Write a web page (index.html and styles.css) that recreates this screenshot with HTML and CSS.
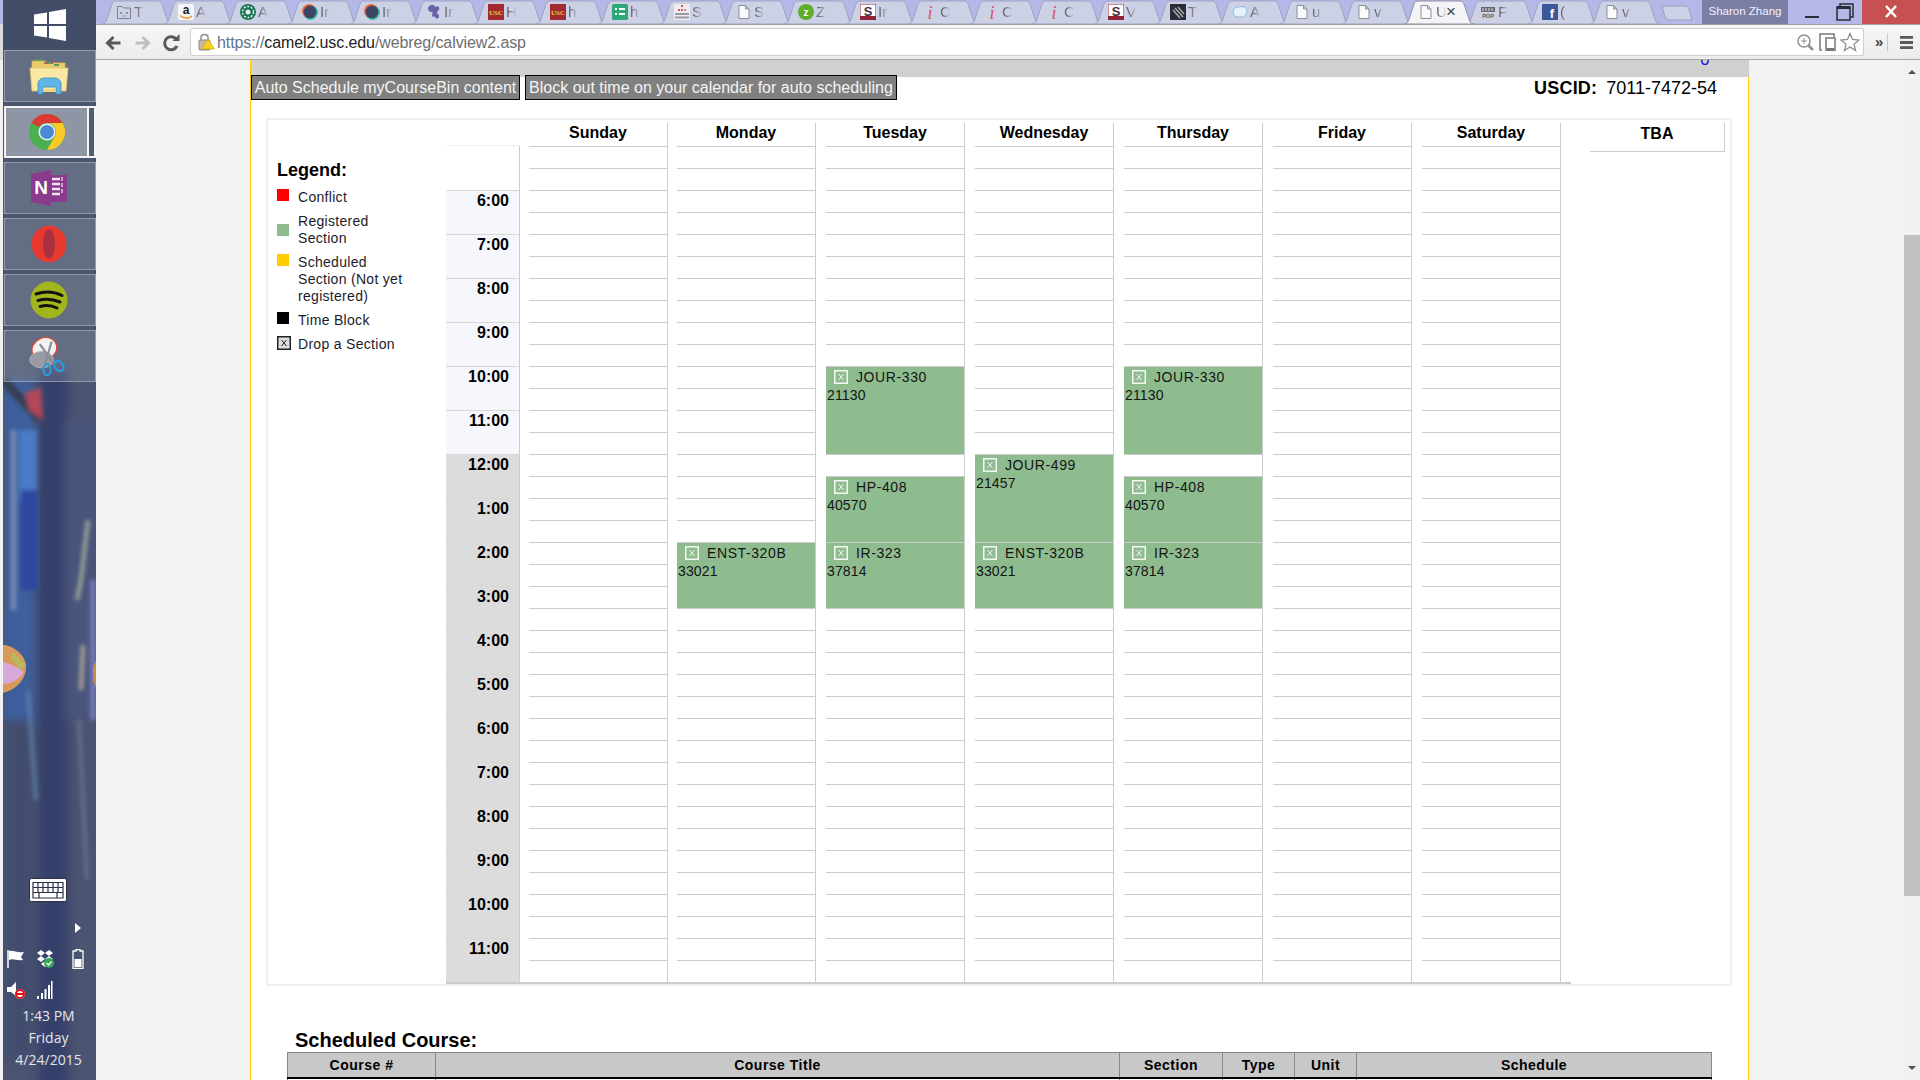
FILE: index.html
```html
<!DOCTYPE html>
<html lang="en">
<head>
<meta charset="utf-8">
<title>calview2</title>
<link rel="stylesheet" href="styles.css">
</head>
<body>
<svg class="defs" width="0" height="0" aria-hidden="true">
  <defs>
    <symbol id="tab-shape" viewBox="0 0 70 24" preserveAspectRatio="none">
      <path d="M0 24 C3 24 4 22 5 19 L10 4 C11 1.500 12 1 15 1 L55 1 C58 1 59 1.500 60 4 L65 19 C66 22 67 24 70 24 Z"/>
    </symbol>
    <symbol id="fav-doc" viewBox="0 0 16 16"><path d="M3 1.500H9.500L13 5V14.500H3Z M9.500 1.500V5H13" fill="#fafafa" stroke="#8a8f98"/></symbol>
    <symbol id="fav-orbit" viewBox="0 0 16 16"><circle cx="8.500" cy="8.500" r="7.500" fill="#38c4b4"/><circle cx="7" cy="7" r="7" fill="#ef6a3c"/><circle cx="8" cy="8" r="6.500" fill="#3c4664"/></symbol>
    <symbol id="fav-usc" viewBox="0 0 16 16"><rect width="16" height="16" fill="#a32a30"/><text x="8" y="11" font-size="7" font-weight="700" text-anchor="middle" fill="#f2c83c" font-family="Liberation Serif">USC</text></symbol>
    <symbol id="fav-i" viewBox="0 0 16 16"><text x="8" y="15" font-size="18" font-style="italic" text-anchor="middle" fill="#d8506e" font-family="Liberation Serif">i</text></symbol>
    <symbol id="fav-s" viewBox="0 0 16 16"><rect width="16" height="16" fill="#fff" stroke="#8f2236"/><rect y="12" width="16" height="4" fill="#8f2236"/><text x="8" y="12" font-size="13" font-weight="700" text-anchor="middle" fill="#4a2a3a" font-family="Liberation Sans">S</text></symbol>
    <symbol id="drop-box" viewBox="0 0 14 14"><rect x=".75" y=".75" width="12.500" height="12.500" fill="none" stroke="currentColor" stroke-width="1.500"/><path d="M4.500 4 L9.500 10 M9.500 4 L4.500 10" stroke="currentColor" stroke-width="1" fill="none"/></symbol>
  </defs>
</svg>

<div class="edge"></div>

<aside class="sidebar">
  <svg class="wallpaper" viewBox="0 0 93 1080" preserveAspectRatio="none" aria-hidden="true">
    <defs>
      <filter id="soft"><feGaussianBlur stdDeviation="2"/></filter>
      <filter id="softer"><feGaussianBlur stdDeviation="5"/></filter>
    </defs>
    <rect width="93" height="1080" fill="#4b5470"/>
    <rect width="93" height="380" fill="#4a5670"/>
    <g filter="url(#softer)">
      <rect x="0" y="380" width="32" height="350" fill="#3c5f9c"/>
      <rect x="35" y="370" width="30" height="720" fill="#36406a"/>
      <rect x="62" y="420" width="30" height="300" fill="#48557c"/>
      <rect x="0" y="720" width="30" height="340" fill="#434e6e"/>
    </g>
    <g filter="url(#soft)">
      <rect x="16" y="430" width="18" height="70" fill="#4a7cc4"/>
      <rect x="8" y="430" width="5" height="180" fill="#7a8eb4"/>
      <rect x="18" y="490" width="16" height="100" fill="#2e47a0"/>
      <path d="M0 380 L38 420" stroke="#343c52" stroke-width="9"/>
      <path d="M22 392 L38 388 L40 420 L26 410Z" fill="#b44658"/>
      <path d="M85 520 L78 580 L74 600" stroke="#a0a898" stroke-width="4" fill="none"/>
      <path d="M90 580 L90 720" stroke="#7a80c0" stroke-width="5"/>
      <path d="M80 645 L78 690" stroke="#b4a898" stroke-width="4"/>
      <path d="M76 720 L84 880" stroke="#6d7590" stroke-width="3"/>
      <path d="M25 690 L33 800" stroke="#5f84b0" stroke-width="3"/>
    </g>
    <path d="M0 645 C10 645 22 655 23 665 C24 680 12 690 0 693Z" fill="#d89a58"/>
    <path d="M0 662 C8 664 16 668 21 672 C16 680 8 684 0 684Z" fill="#d8a8d8"/>
    <path d="M10 652 L22 664 L19 670 L8 660Z" fill="#b8b85c"/>
    <path d="M93 660 L90 668 L90 680 L93 688Z" fill="#c88a50"/>
  </svg>

  <div class="start">
    <svg class="start-logo" viewBox="0 0 32 32" aria-hidden="true"><path d="M0 5.500 L13 3.500 V15 H0Z M15 3 L32 0 V15 H15Z M0 17 H13 V28.500 L0 26.500Z M15 17 H32 V32 L15 29Z" fill="#fff"/></svg>
  </div>

  <div class="tile">
    <svg class="tile-icon" viewBox="0 0 40 40" aria-hidden="true">
      <path d="M3 5 H16 L18 7 H36 V34 H3Z" fill="#eccb6c" stroke="#d8b850" stroke-width=".8"/>
      <path d="M6 4 H13 M15 7 H22 M25 9 H30" stroke="#5f9a5a" stroke-width="2"/>
      <path d="M17 7 H19 M22 7 H24" stroke="#d8503c" stroke-width="2"/>
      <path d="M1 12 H39 L37 35 H3Z" fill="#fbe8a4" stroke="#e0c468" stroke-width=".8"/>
      <path d="M9 38 V28 C9 24 12 22 16 22 H25 C29 22 32 24 32 28 V38 H27 V31 H14 V38Z" fill="#62b6e6" stroke="#3a88c0" stroke-width=".8"/>
      <rect x="14" y="33" width="13" height="3" fill="#f2d67a"/>
    </svg>
  </div>
  <div class="tile tile-active">
    <svg class="tile-icon" viewBox="0 0 40 40" aria-hidden="true">
      <circle cx="20" cy="20" r="18" fill="#4caf50"/>
      <path d="M4.400 11 A18 18 0 0 1 35.600 11 L20 11 A9 9 0 0 0 12 15Z" fill="#db3a32"/>
      <path d="M35.600 11 A18 18 0 0 1 20 38 L27.800 24.500 A9 9 0 0 0 20 11Z" fill="#fbc925"/>
      <circle cx="20" cy="20" r="8.500" fill="#eef2f6"/>
      <circle cx="20" cy="20" r="7" fill="#4a8ad4"/>
    </svg>
  </div>
  <div class="tile">
    <svg class="tile-icon" viewBox="0 0 40 40" aria-hidden="true">
      <path d="M2 6 L22 2 V38 L2 34Z" fill="#8a3a8c"/>
      <rect x="22" y="7" width="16" height="27" fill="#8a3a8c"/>
      <path d="M23 11 H31 M23 16 H31 M23 21 H31 M23 26 H31" stroke="#f0e4f0" stroke-width="2.500"/>
      <path d="M33 9 V13 M33 15 V19 M33 21 V25" stroke="#c8a4c8" stroke-width="2"/>
      <text x="12" y="26" font-size="19" font-weight="700" text-anchor="middle" fill="#fff" font-family="Liberation Sans">N</text>
    </svg>
  </div>
  <div class="tile">
    <svg class="tile-icon" viewBox="0 0 40 40" aria-hidden="true">
      <ellipse cx="20" cy="20" rx="17.500" ry="18.500" fill="#e8392f"/>
      <ellipse cx="20" cy="20" rx="6" ry="15" fill="#a83040"/>
    </svg>
  </div>
  <div class="tile">
    <svg class="tile-icon" viewBox="0 0 40 40" aria-hidden="true">
      <circle cx="20" cy="20" r="18.500" fill="#a2b51c"/>
      <path d="M7 14 C16 11 25 11.500 33 15.500 M9 20.500 C16 18.500 24 19 31 22 M11 26.500 C17 25 23 25.500 28 28" fill="none" stroke="#12140c" stroke-width="3" stroke-linecap="round"/>
    </svg>
  </div>
  <div class="tile tile-snip">
    <svg class="tile-icon" viewBox="0 0 40 44" aria-hidden="true">
      <ellipse cx="16" cy="14" rx="14" ry="12" transform="rotate(-25 16 14)" fill="#f2f2f2" stroke="#d84a3a" stroke-width="1.500"/>
      <ellipse cx="13" cy="26" rx="13" ry="9" fill="#9a9aa4" stroke="#b0b0b8"/>
      <path d="M11 9 L26 30 M24 6 L17 30" stroke="#8a8f98" stroke-width="2.500"/>
      <ellipse cx="19" cy="37" rx="4" ry="6" fill="none" stroke="#2a9ae0" stroke-width="2.500"/>
      <ellipse cx="32" cy="33" rx="4.500" ry="6" transform="rotate(-40 32 33)" fill="none" stroke="#2a9ae0" stroke-width="2.500"/>
    </svg>
  </div>

  <svg class="keyboard" viewBox="0 0 38 24" aria-hidden="true">
    <rect x=".5" y=".5" width="37" height="23" rx="2" fill="#fff" stroke="#2c3044"/>
    <path d="M4 4.500 H34 V20 H4Z M4 9.500 H34 M4 14.500 H34 M9 4.500 V14.500 M14 4.500 V14.500 M19 4.500 V14.500 M24 4.500 V14.500 M29 4.500 V14.500 M10 14.500 V20 M28 14.500 V20" fill="none" stroke="#2c3044" stroke-width="1.200"/>
  </svg>
  <div class="tray-more"></div>
  <div class="tray-row">
    <svg class="tray-icon" viewBox="0 0 20 20" aria-hidden="true"><path d="M2 1 V19" stroke="#fff" stroke-width="1.500"/><path d="M3 2 C8 1 10 4 18 3 L15 8 L17 11 C10 12 8 9 3 11Z" fill="#fff"/></svg>
    <svg class="tray-icon" viewBox="0 0 20 20" aria-hidden="true"><path d="M2 4 L6 1 L10 4 L14 1 L18 4 L14 7 L18 10 L14 13 L10 10 L6 13 L2 10 L6 7 L10 10 L14 7 L10 4 L6 7Z" fill="#fff"/><path d="M6 15 L10 18 L14 15 L10 12Z" fill="#fff"/><circle cx="14" cy="14" r="5" fill="#34a853"/><path d="M11.500 14 L13.500 16 L16.500 12.500" stroke="#fff" stroke-width="1.300" fill="none"/></svg>
    <svg class="tray-icon tray-battery" viewBox="0 0 20 20" aria-hidden="true"><path d="M8 .5 H12 V2 H15 V19.500 H5 V2 H8Z" fill="none" stroke="#fff" stroke-width="1.300"/><rect x="6.500" y="10" width="7" height="8" fill="#fff"/></svg>
  </div>
  <div class="tray-row tray-row-short">
    <svg class="tray-icon" viewBox="0 0 20 20" aria-hidden="true"><path d="M1 7 H5 L10 2 V16 L5 12 H1Z" fill="#fff"/><circle cx="14" cy="14" r="5" fill="#fff"/><circle cx="14" cy="14" r="4" fill="none" stroke="#e01010" stroke-width="2"/><path d="M11 14 H17" stroke="#e01010" stroke-width="2"/></svg>
    <svg class="tray-icon" viewBox="0 0 20 20" aria-hidden="true"><path d="M3 16 H5 V19 H3Z M7 13 H9 V19 H7Z M10.500 9 H12.500 V19 H10.500Z M14 5 H16 V19 H14Z M17 1 H18.500 V19 H17Z" fill="#fff"/></svg>
  </div>
  <div class="clock">
    <div>1:43 PM</div>
    <div>Friday</div>
    <div>4/24/2015</div>
  </div>
</aside>

<div class="browser">
  <header class="tabstrip">
    <div class="tab">
      <svg class="tab-shape"><use href="#tab-shape"/></svg>
      <svg class="fav" viewBox="0 0 16 16"><path d="M1.500 14.500 V2.500 H6 L7.500 4 H14.500 V14.500Z" fill="none" stroke="#7d8088"/><path d="M4 8 L6 10 M6 8 L4 10 M10 8 L12 10 M12 8 L10 10 M6 12 H10" stroke="#7d8088" stroke-width=".8"/></svg>
      <span class="tab-title">T</span>
    </div>
    <div class="tab">
      <svg class="tab-shape"><use href="#tab-shape"/></svg>
      <svg class="fav" viewBox="0 0 16 16"><rect width="16" height="16" rx="2" fill="#f4f4f8"/><text x="8" y="10" font-size="12" font-weight="700" text-anchor="middle" fill="#222" font-family="Liberation Sans">a</text><path d="M2 11.500 C6 15 11 15 14 12" stroke="#f0941e" stroke-width="1.500" fill="none"/></svg>
      <span class="tab-title">A</span>
    </div>
    <div class="tab">
      <svg class="tab-shape"><use href="#tab-shape"/></svg>
      <svg class="fav" viewBox="0 0 16 16"><circle cx="8" cy="8" r="8" fill="#1a7454"/><circle cx="8" cy="8" r="5.500" fill="none" stroke="#e4efe8" stroke-dasharray="2 1.500" stroke-width="1.500"/><circle cx="8" cy="8" r="2.500" fill="#e4efe8"/></svg>
      <span class="tab-title">A</span>
    </div>
    <div class="tab">
      <svg class="tab-shape"><use href="#tab-shape"/></svg>
      <svg class="fav"><use href="#fav-orbit"/></svg>
      <span class="tab-title">In</span>
    </div>
    <div class="tab">
      <svg class="tab-shape"><use href="#tab-shape"/></svg>
      <svg class="fav"><use href="#fav-orbit"/></svg>
      <span class="tab-title">In</span>
    </div>
    <div class="tab">
      <svg class="tab-shape"><use href="#tab-shape"/></svg>
      <svg class="fav" viewBox="0 0 16 16"><path d="M2 4 C4 0 8 0 9 3 C12 1 15 4 12 7 C10 8 11 10 13 11 C14 15 9 16 9 12 C7 15 5 11 7 8 C5 8 2 8 2 4Z" fill="#6a62a8"/></svg>
      <span class="tab-title">In</span>
    </div>
    <div class="tab">
      <svg class="tab-shape"><use href="#tab-shape"/></svg>
      <svg class="fav"><use href="#fav-usc"/></svg>
      <span class="tab-title">H</span>
    </div>
    <div class="tab">
      <svg class="tab-shape"><use href="#tab-shape"/></svg>
      <svg class="fav"><use href="#fav-usc"/></svg>
      <span class="tab-title">h</span>
    </div>
    <div class="tab">
      <svg class="tab-shape"><use href="#tab-shape"/></svg>
      <svg class="fav" viewBox="0 0 16 16"><rect width="16" height="16" rx="1.500" fill="#2ea878"/><path d="M3 5 H5 M7 5 H13 M3 10 H5 M7 10 H13" stroke="#fff" stroke-width="1.800"/></svg>
      <span class="tab-title">h</span>
    </div>
    <div class="tab">
      <svg class="tab-shape"><use href="#tab-shape"/></svg>
      <svg class="fav" viewBox="0 0 16 16"><rect width="16" height="16" fill="#eeeef2"/><path d="M7 1 H9 V3 H7Z M4 5 H6 V7 H4Z M7 5 H9 V7 H7Z" fill="#e0524e"/><path d="M10 5 H12 V7 H10Z M1 9 H15 V11 H1Z M1 12.500 H15 V14.500 H1Z" fill="#9a9aa4"/></svg>
      <span class="tab-title">S</span>
    </div>
    <div class="tab">
      <svg class="tab-shape"><use href="#tab-shape"/></svg>
      <svg class="fav"><use href="#fav-doc"/></svg>
      <span class="tab-title">S</span>
    </div>
    <div class="tab">
      <svg class="tab-shape"><use href="#tab-shape"/></svg>
      <svg class="fav" viewBox="0 0 16 16"><circle cx="8" cy="8" r="8" fill="#62ac2c"/><text x="8" y="11.500" font-size="10" font-weight="700" text-anchor="middle" fill="#fff" font-family="Liberation Sans">z</text></svg>
      <span class="tab-title">Z</span>
    </div>
    <div class="tab">
      <svg class="tab-shape"><use href="#tab-shape"/></svg>
      <svg class="fav"><use href="#fav-s"/></svg>
      <span class="tab-title">In</span>
    </div>
    <div class="tab">
      <svg class="tab-shape"><use href="#tab-shape"/></svg>
      <svg class="fav"><use href="#fav-i"/></svg>
      <span class="tab-title">C</span>
    </div>
    <div class="tab">
      <svg class="tab-shape"><use href="#tab-shape"/></svg>
      <svg class="fav"><use href="#fav-i"/></svg>
      <span class="tab-title">C</span>
    </div>
    <div class="tab">
      <svg class="tab-shape"><use href="#tab-shape"/></svg>
      <svg class="fav"><use href="#fav-i"/></svg>
      <span class="tab-title">C</span>
    </div>
    <div class="tab">
      <svg class="tab-shape"><use href="#tab-shape"/></svg>
      <svg class="fav"><use href="#fav-s"/></svg>
      <span class="tab-title">V</span>
    </div>
    <div class="tab">
      <svg class="tab-shape"><use href="#tab-shape"/></svg>
      <svg class="fav" viewBox="0 0 16 16"><rect width="16" height="16" fill="#2a2c38"/><path d="M3 6 L10 14 M5 4 L13 13 M8 3 L14 10" stroke="#a8a8ac" stroke-width="1.500"/></svg>
      <span class="tab-title">T</span>
    </div>
    <div class="tab">
      <svg class="tab-shape"><use href="#tab-shape"/></svg>
      <svg class="fav" viewBox="0 0 16 16"><path d="M1 8 C1 4 4 3 7 3 C11 2 15 3 15 7 C15 11 11 14 6 13 C3 13 1 11 1 8Z" fill="#e4f0fa" stroke="#8cb8dc"/></svg>
      <span class="tab-title">A</span>
    </div>
    <div class="tab">
      <svg class="tab-shape"><use href="#tab-shape"/></svg>
      <svg class="fav"><use href="#fav-doc"/></svg>
      <span class="tab-title">u</span>
    </div>
    <div class="tab">
      <svg class="tab-shape"><use href="#tab-shape"/></svg>
      <svg class="fav"><use href="#fav-doc"/></svg>
      <span class="tab-title">v</span>
    </div>
    <div class="tab tab-active">
      <svg class="tab-shape"><use href="#tab-shape"/></svg>
      <svg class="fav"><use href="#fav-doc"/></svg>
      <span class="tab-title">U</span>
      <span class="tab-close">×</span>
    </div>
    <div class="tab">
      <svg class="tab-shape"><use href="#tab-shape"/></svg>
      <svg class="fav" viewBox="0 0 16 16"><path d="M1 3 H15 V8 H1Z" fill="#6a6c74"/><path d="M3 4 V7 M6 4 V7 M9 4 V7 M12 4 V7" stroke="#dcdce2"/><text x="8" y="14" font-size="5.500" font-weight="700" text-anchor="middle" fill="#55575f" font-family="Liberation Sans">POP</text></svg>
      <span class="tab-title">F</span>
    </div>
    <div class="tab">
      <svg class="tab-shape"><use href="#tab-shape"/></svg>
      <svg class="fav" viewBox="0 0 16 16"><rect width="16" height="16" fill="#3b5998"/><text x="10" y="14" font-size="13" font-weight="700" text-anchor="middle" fill="#fff" font-family="Liberation Sans">f</text></svg>
      <span class="tab-title">(</span>
    </div>
    <div class="tab">
      <svg class="tab-shape"><use href="#tab-shape"/></svg>
      <svg class="fav"><use href="#fav-doc"/></svg>
      <span class="tab-title">v</span>
    </div>
    <svg class="new-tab" viewBox="0 0 32 16" aria-hidden="true"><path d="M1 1 H24 C26 1 27 2 28 4 L31 15 H7 C5 15 5 14 4 12Z" fill="#cdd1e5" stroke="#9a9dc4"/></svg>
    <div class="profile">Sharon Zhang</div>
    <div class="win-btn win-min">
      <svg class="win-icon" viewBox="0 0 20 20" aria-hidden="true"><rect x="3" y="14" width="14" height="2" fill="#2a2c3a"/></svg>
    </div>
    <div class="win-btn">
      <svg class="win-icon" viewBox="0 0 20 20" aria-hidden="true"><path d="M6 5 V2 H19 V15 H16" fill="none" stroke="#2a2c3a" stroke-width="1.500"/><rect x="3" y="5" width="13" height="13" fill="none" stroke="#2a2c3a" stroke-width="1.500"/><rect x="3" y="4" width="13" height="3" fill="#2a2c3a"/></svg>
    </div>
    <div class="win-close">
      <svg class="win-icon" viewBox="0 0 20 20" aria-hidden="true"><path d="M5 4 L15 15 M15 4 L5 15" stroke="#fff" stroke-width="2.500"/></svg>
    </div>
  </header>

  <div class="toolbar">
    <svg class="nav-icon" viewBox="0 0 20 20" aria-hidden="true"><path d="M17 10 H5 M10 4 L4 10 L10 16" fill="none" stroke="#5a5a5a" stroke-width="3"/></svg>
    <svg class="nav-icon" viewBox="0 0 20 20" aria-hidden="true"><path d="M3 10 H15 M10 4 L16 10 L10 16" fill="none" stroke="#c0c0c0" stroke-width="3"/></svg>
    <svg class="nav-icon" viewBox="0 0 20 20" aria-hidden="true"><path d="M15.500 13 A6.500 6.500 0 1 1 15 6.500" fill="none" stroke="#5a5a5a" stroke-width="3"/><path d="M11 8 H18 V1Z" fill="#5a5a5a"/></svg>
    <div class="omnibox">
      <svg class="lock" viewBox="0 0 18 18" aria-hidden="true"><path d="M4 7 V4.500 C4 .5 11 .5 11 4.500 V7" fill="none" stroke="#8a8a8a" stroke-width="1.500"/><rect x="2" y="7" width="11" height="10" rx="1" fill="#c8b898" stroke="#8a8a8a"/><path d="M11 6 L17.500 16 H5Z" fill="#fbd21e" stroke="#c8a000" stroke-width=".6"/></svg>
      <span class="url"><span class="url-scheme">https://</span><span class="url-host">camel2.usc.edu</span><span class="url-path">/webreg/calview2.asp</span></span>
      <svg class="omni-icon omni-zoom" viewBox="0 0 18 18" aria-hidden="true"><circle cx="8" cy="8" r="6" fill="none" stroke="#8f8f8f" stroke-width="1.500"/><path d="M8 5 V11 M5 8 H11" stroke="#8f8f8f"/><path d="M12.500 12.500 L17 17" stroke="#8f8f8f" stroke-width="2.500"/></svg>
      <svg class="omni-icon omni-device" viewBox="0 0 18 18" aria-hidden="true"><path d="M3 17 H1 V1 H15 V4" fill="none" stroke="#777" stroke-width="1.500"/><rect x="7" y="5" width="9" height="12.500" fill="#fff" stroke="#777" stroke-width="1.500"/><rect x="8" y="15" width="7" height="2" fill="#777"/></svg>
      <svg class="omni-star" viewBox="0 0 20 20" aria-hidden="true"><path d="M10 1.500 L12.500 7.500 L19 8 L14 12.200 L15.600 18.500 L10 15 L4.400 18.500 L6 12.200 L1 8 L7.500 7.500Z" fill="none" stroke="#8f8f8f" stroke-width="1.300"/></svg>
    </div>
    <span class="overflow">»</span>
    <svg class="menu" viewBox="0 0 14 16" aria-hidden="true"><path d="M0 1 H14 V4 H0Z M0 6.500 H14 V9.500 H0Z M0 12 H14 V15 H0Z" fill="#5a5a5a"/></svg>
  </div>

  <div class="viewport">
    <main class="page">
      <div class="topbar">
        <svg class="topbar-glyph" viewBox="0 0 8 5" aria-hidden="true"><path d="M.8 0 C.8 6 7.200 6 7.200 0" fill="none" stroke="#1a1ad8" stroke-width="1.500"/></svg>
      </div>
      <div class="sheet">
        <div class="actions">
          <button class="action action-auto" type="button">Auto Schedule myCourseBin content</button>
          <button class="action action-block" type="button">Block out time on your calendar for auto scheduling</button>
          <div class="uscid"><b>USCID:</b><span>7011-7472-54</span></div>
        </div>

        <section class="calendar-box">
          <div class="legend">
            <h2 class="legend-title">Legend:</h2>
            <div class="legend-row"><i class="swatch swatch-conflict"></i><span>Conflict</span></div>
            <div class="legend-row legend-row-center"><i class="swatch swatch-registered"></i><span>Registered Section</span></div>
            <div class="legend-row"><i class="swatch swatch-scheduled"></i><span>Scheduled Section (Not yet registered)</span></div>
            <div class="legend-row"><i class="swatch swatch-block"></i><span>Time Block</span></div>
            <div class="legend-row"><svg class="legend-drop"><use href="#drop-box"/></svg><span>Drop a Section</span></div>
          </div>

          <div class="grid">
            <div class="times">
              <div class="time-head"></div>
              <div class="time-blank"></div>
              <div class="hour">6:00</div>
              <div class="hour">7:00</div>
              <div class="hour">8:00</div>
              <div class="hour">9:00</div>
              <div class="hour">10:00</div>
              <div class="hour">11:00</div>
              <div class="hour hour-pm">12:00</div>
              <div class="hour hour-pm">1:00</div>
              <div class="hour hour-pm">2:00</div>
              <div class="hour hour-pm">3:00</div>
              <div class="hour hour-pm">4:00</div>
              <div class="hour hour-pm">5:00</div>
              <div class="hour hour-pm">6:00</div>
              <div class="hour hour-pm">7:00</div>
              <div class="hour hour-pm">8:00</div>
              <div class="hour hour-pm">9:00</div>
              <div class="hour hour-pm">10:00</div>
              <div class="hour hour-pm">11:00</div>
            </div>

            <div class="day"><div class="day-head">Sunday</div><div class="day-body"></div></div>

            <div class="day">
              <div class="day-head">Monday</div>
              <div class="day-body">
                <div class="event at-2pm"><div class="event-line"><svg class="event-drop"><use href="#drop-box"/></svg>ENST-320B</div><div class="event-id">33021</div></div>
              </div>
            </div>

            <div class="day">
              <div class="day-head">Tuesday</div>
              <div class="day-body">
                <div class="event at-10am"><div class="event-line"><svg class="event-drop"><use href="#drop-box"/></svg>JOUR-330</div><div class="event-id">21130</div></div>
                <div class="event at-1230"><div class="event-line"><svg class="event-drop"><use href="#drop-box"/></svg>HP-408</div><div class="event-id">40570</div></div>
                <div class="event at-2pm"><div class="event-line"><svg class="event-drop"><use href="#drop-box"/></svg>IR-323</div><div class="event-id">37814</div></div>
              </div>
            </div>

            <div class="day">
              <div class="day-head">Wednesday</div>
              <div class="day-body">
                <div class="event at-noon"><div class="event-line"><svg class="event-drop"><use href="#drop-box"/></svg>JOUR-499</div><div class="event-id">21457</div></div>
                <div class="event at-2pm"><div class="event-line"><svg class="event-drop"><use href="#drop-box"/></svg>ENST-320B</div><div class="event-id">33021</div></div>
              </div>
            </div>

            <div class="day">
              <div class="day-head">Thursday</div>
              <div class="day-body">
                <div class="event at-10am"><div class="event-line"><svg class="event-drop"><use href="#drop-box"/></svg>JOUR-330</div><div class="event-id">21130</div></div>
                <div class="event at-1230"><div class="event-line"><svg class="event-drop"><use href="#drop-box"/></svg>HP-408</div><div class="event-id">40570</div></div>
                <div class="event at-2pm"><div class="event-line"><svg class="event-drop"><use href="#drop-box"/></svg>IR-323</div><div class="event-id">37814</div></div>
              </div>
            </div>

            <div class="day"><div class="day-head">Friday</div><div class="day-body"></div></div>
            <div class="day"><div class="day-head">Saturday</div><div class="day-body"></div></div>
          </div>

          <div class="tba">TBA</div>
        </section>

        <h2 class="scheduled-title">Scheduled Course:</h2>
        <table class="courses">
          <colgroup>
            <col class="col-num"><col class="col-title"><col class="col-section"><col class="col-type"><col class="col-unit"><col class="col-schedule">
          </colgroup>
          <thead>
            <tr><th>Course #</th><th>Course Title</th><th>Section</th><th>Type</th><th>Unit</th><th>Schedule</th></tr>
          </thead>
          <tbody>
            <tr><td></td><td></td><td></td><td></td><td></td><td></td></tr>
          </tbody>
        </table>
      </div>
    </main>

    <div class="scrollbar">
      <i class="arrow-up"></i>
      <div class="thumb"></div>
      <i class="arrow-down"></i>
    </div>
  </div>
</div>
</body>
</html>
```

FILE: styles.css
```css
* { box-sizing: border-box; }
html, body { margin: 0; padding: 0; }
body {
  width: 1920px;
  height: 1080px;
  overflow: hidden;
  display: flex;
  background: #f2f2f2;
  font-family: "Liberation Sans", Arial, sans-serif;
  color: #000;
}
.defs { position: absolute; }

.edge {
  width: 3px;
  flex: none;
  background: linear-gradient(to bottom, #b5b8e6 0 24px, #dcdcdc 24px 60px, #f2f2f2 60px);
}

/* Taskbar */
.sidebar {
  position: relative;
  width: 93px;
  flex: none;
  height: 1080px;
  display: flex;
  flex-direction: column;
  align-items: center;
  overflow: hidden;
}
.wallpaper { position: absolute; left: 0; top: 0; width: 93px; height: 1080px; }
.start {
  position: relative;
  width: 93px;
  height: 50px;
  flex: none;
  display: flex;
  align-items: center;
  justify-content: center;
  background: rgba(60, 72, 96, .55);
}
.start-logo { width: 32px; height: 32px; margin-top: -1px; }
.tile {
  position: relative;
  width: 92px;
  height: 52px;
  flex: none;
  margin-bottom: 4px;
  padding-right: 2px;
  display: flex;
  align-items: center;
  justify-content: center;
  background: rgba(255, 255, 255, .14);
  border: 1px solid rgba(255, 255, 255, .32);
}
.tile-active {
  padding-right: 6px;
  background: rgba(255, 255, 255, .38);
  border: 2px solid #f4f4f6;
  box-shadow: inset -5px 0 0 #555b72, inset -7px 0 0 #f4f4f6;
}
.tile-snip { padding-right: 4px; }
.tile-icon { width: 40px; height: 40px; }
.keyboard { position: relative; width: 38px; height: 24px; margin-top: auto; margin-right: 4px; flex: none; }
.tray-more {
  position: relative;
  align-self: flex-end;
  width: 0;
  height: 0;
  margin: 21px 15px 0 0;
  border-left: 6px solid #fff;
  border-top: 5px solid transparent;
  border-bottom: 5px solid transparent;
}
.tray-row {
  position: relative;
  align-self: stretch;
  display: flex;
  gap: 9px;
  padding-left: 3px;
  margin-top: 16px;
}
.tray-row-short { gap: 8px; margin-top: 11px; }
.tray-icon { width: 20px; height: 20px; }
.tray-battery { margin-left: 4px; }
.clock {
  position: relative;
  margin-top: 5px;
  margin-right: 2px;
  padding-bottom: 9px;
  text-align: center;
  color: #e6e6ea;
  font: 14px/22px "Open Sans", sans-serif;
}

/* Browser chrome */
.browser { width: 1824px; display: flex; flex-direction: column; height: 1080px; }
.tabstrip {
  height: 24px;
  flex: none;
  display: flex;
  background: #b5b8e6;
  padding-left: 6px;
}
.tab {
  position: relative;
  width: 70px;
  height: 24px;
  margin-right: -8px;
  flex: none;
  display: flex;
  align-items: center;
  padding-left: 14px;
}
.tab-shape {
  position: absolute;
  left: 0;
  top: 0;
  width: 70px;
  height: 24px;
  fill: #cdd1e5;
  stroke: #9fa2c6;
}
.tab-active { z-index: 2; }
.tab-active .tab-shape { fill: #f4f4f6; stroke: #8e90a8; }
.fav { position: relative; width: 16px; height: 16px; flex: none; }
.tab-title {
  position: relative;
  width: 14px;
  margin-left: 2px;
  font-size: 15px;
  line-height: 20px;
  color: #6a6c78;
  white-space: nowrap;
  -webkit-mask-image: linear-gradient(to right, #000 20%, transparent 75%);
  mask-image: linear-gradient(to right, #000 20%, transparent 75%);
}
.tab-close { position: relative; margin-left: -4px; font-size: 17px; color: #444; }
.new-tab { width: 32px; height: 16px; margin: 5px 0 0 9px; flex: none; }
.profile {
  margin-left: auto;
  width: 86px;
  text-align: center;
  background: #7c7ea6;
  color: #f2f2f6;
  font-size: 11.500px;
  line-height: 22px;
}
.win-btn { width: 37px; display: flex; align-items: center; justify-content: center; }
.win-min { padding-left: 10px; }
.win-close {
  width: 58px;
  display: flex;
  align-items: center;
  justify-content: center;
  background: #c75050;
}
.win-icon { width: 20px; height: 20px; flex: none; }
.toolbar {
  height: 36px;
  flex: none;
  display: flex;
  align-items: center;
  padding: 0 3px 0 3px;
  background: linear-gradient(to bottom, #f6f6f6, #ececec);
  border-top: 1px solid #a4a4a4;
  border-bottom: 1px solid #a8a8a8;
}
.nav-icon { width: 29px; height: 20px; flex: none; margin-top: 1px; }
.omnibox {
  height: 28px;
  flex: none;
  width: 1674px;
  margin-left: 4px;
  display: flex;
  align-items: center;
  padding-left: 6px;
  padding-right: 3px;
  background: #fff;
  border: 1px solid #cfcfcf;
  border-radius: 2px;
}
.lock { width: 18px; height: 18px; flex: none; }
.url { margin-left: 2px; padding-top: 1px; font-size: 16px; flex: 1; white-space: nowrap; letter-spacing: -.1px; }
.url-scheme { color: #5f7486; }
.url-host { color: #222; }
.url-path { color: #6e6e6e; }
.omni-icon { flex: none; }
.omni-zoom { width: 18px; height: 18px; margin-right: 5px; }
.omni-device { width: 18px; height: 18px; margin-right: 3px; }
.omni-star { width: 20px; height: 20px; flex: none; }
.overflow { margin-left: 11px; font-size: 15px; color: #444; border-right: 1px solid #c8c8c8; padding-right: 4px; line-height: 18px; font-weight: 700; }
.menu { width: 13px; height: 15px; margin-left: 12px; }

/* Viewport */
.viewport { flex: 1; display: flex; min-height: 0; background: #f2f2f2; }
.page {
  width: 1808px;
  padding-left: 154px;
  overflow: hidden;
}
.topbar {
  width: 1499px;
  height: 17px;
  background: #d0d0d0;
  border-left: 1px solid #fc0;
  display: flex;
  justify-content: flex-end;
  padding-right: 40px;
}
.topbar-glyph { width: 8px; height: 5px; }
.sheet {
  width: 1499px;
  height: 1003px;
  background: #fff;
  border-left: 1px solid #fc0;
  border-right: 1px solid #fc0;
}
.actions {
  height: 41px;
  display: flex;
  align-items: flex-start;
}
.action {
  margin-top: -2px;
  position: relative;
  height: 25px;
  padding: 0;
  background: #808080;
  border: 1.500px solid #000;
  color: #f4f4f4;
  font: 16px/20px "Liberation Sans", sans-serif;
}
.action-auto { width: 269px; }
.action-block { width: 372px; margin-left: 5px; }
.uscid {
  margin-left: auto;
  padding-right: 31px;
  font-size: 18px;
  line-height: 22px;
  display: flex;
  gap: 9px;
}
.uscid b { letter-spacing: .2px; }
.calendar-box {
  display: flex;
  align-items: flex-start;
  width: 1466px;
  height: 868px;
  margin-left: 15px;
  background: #fff;
  border: 2px solid #f0f0f0;
}
.legend { width: 178px; flex: none; padding: 40px 0 0 9px; }
.legend-title { margin: 0 0 9px; font-size: 18px; line-height: 20px; font-weight: 700; }
.legend-row {
  display: grid;
  grid-template-columns: 21px 112px;
  align-items: start;
  font-size: 14px;
  line-height: 17px;
  letter-spacing: .3px;
  margin-bottom: 7px;
  color: #1c1c28;
}
.legend-row-center { align-items: center; }
.swatch { display: block; width: 12px; height: 12px; }
.swatch-conflict { background: #f00; }
.swatch-registered { background: #8fbc8f; }
.swatch-scheduled { background: #fc0; }
.swatch-block { background: #000; }
.legend-drop { width: 14px; height: 14px; color: #222; background: #ddd; }

.grid {
  display: grid;
  grid-template-columns: 74px 148px 148px 149px 149px 149px 149px 149px;
  width: 1125px;
  height: 864px;
  flex: none;
  padding-top: 3px;
  border-bottom: 2px solid #ccc;
}
.times { display: flex; flex-direction: column; }
.time-head { height: 23px; border-bottom: 1px solid #eee; }
.time-blank { height: 44px; border-right: 1px solid #ccc; }
.hour {
  height: 44px;
  flex: none;
  text-align: right;
  padding: 0 10px 0 0;
  border-top: 1px solid #d8d8d8;
  border-right: 1px solid #ccc;
  background: #f6f7fd;
  font-size: 16px;
  font-weight: 700;
  line-height: 19px;
}
.hour-pm { background: #dcdcdc; }
.day { border-right: 1px solid #ccc; display: flex; flex-direction: column; }
.day-head {
  width: 138px;
  margin-left: auto;
  height: 23px;
  flex: none;
  text-align: center;
  font-size: 16px;
  line-height: 19px;
  font-weight: 700;
}
.day-body {
  position: relative;
  width: 138px;
  margin-left: auto;
  height: 836px;
  flex: none;
  background: repeating-linear-gradient(to bottom, #ccc 0, #ccc 1px, transparent 1px, transparent 22px);
}
.event {
  position: absolute;
  left: 0;
  right: 0;
  background: #8fbc8f;
  border-top: 1px solid #ccc;
  border-bottom: 1px solid #ccc;
  font-size: 14px;
  line-height: 18px;
  color: #141414;
  padding: 1px 0 0 1px;
}
.event-line { display: flex; align-items: center; letter-spacing: .6px; }
.event-id { letter-spacing: .15px; }
.event-drop { width: 14px; height: 14px; color: #f4f8f4; margin: 0 8px 0 7px; flex: none; }
.at-10am { top: 220px; height: 89px; }
.at-noon { top: 308px; height: 89px; }
.at-1230 { top: 330px; height: 67px; }
.at-2pm { top: 396px; height: 67px; }
.tba {
  width: 135px;
  height: 29px;
  flex: none;
  margin: 3px 0 0 19px;
  border-right: 1px solid #ccc;
  border-bottom: 1px solid #ccc;
  text-align: center;
  font-size: 16px;
  font-weight: 700;
  line-height: 22px;
}
.scheduled-title {
  margin: 0;
  height: 66px;
  padding: 42px 0 0 44px;
  font-size: 20px;
  line-height: 24px;
  font-weight: 700;
}
.courses {
  table-layout: fixed;
  border-collapse: collapse;
  width: 1424px;
  margin-left: 36px;
}
.col-num { width: 148px; }
.col-title { width: 684px; }
.col-section { width: 103px; }
.col-type { width: 72px; }
.col-unit { width: 62px; }
.col-schedule { width: 355px; }
.courses th {
  height: 25px;
  padding: 0;
  background: #c8c8c8;
  border: 1px solid #888;
  border-bottom: 2px solid #000;
  font-size: 14px;
  font-weight: 700;
  letter-spacing: .5px;
}
.courses td { height: 40px; border-left: 1px solid #888; border-right: 1px solid #888; }

/* Scrollbar */
.scrollbar {
  width: 16px;
  flex: none;
  display: flex;
  flex-direction: column;
  align-items: center;
  background: #f1f1f1;
  height: 1020px;
}
.arrow-up, .arrow-down { width: 0; height: 0; border-left: 4px solid transparent; border-right: 4px solid transparent; flex: none; }
.arrow-up { margin-top: 10px; border-bottom: 4px solid #505050; }
.thumb { width: 16px; height: 661px; margin-top: 161px; background: #c0c0c0; flex: none; }
.arrow-down { margin-top: 170px; border-top: 4px solid #505050; }
```
